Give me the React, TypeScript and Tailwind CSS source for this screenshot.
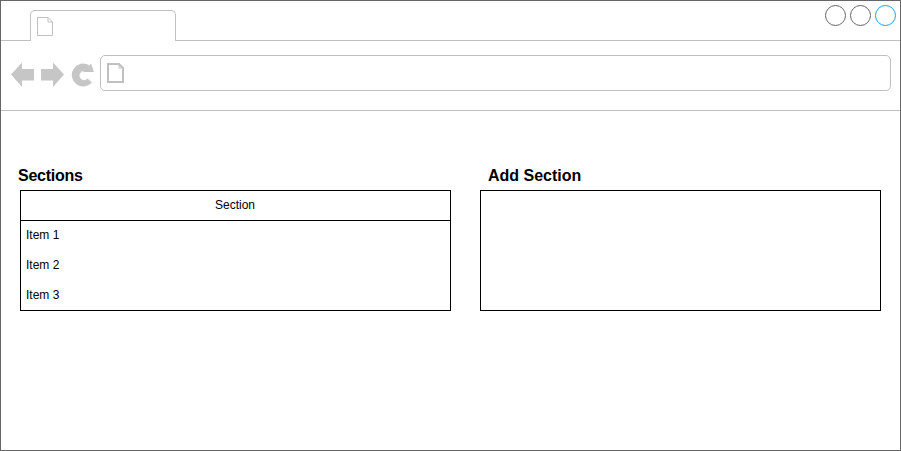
function Doc({ w, h, sw }: { w: number; h: number; sw: number }) {
  return (
    <svg width={w} height={h} viewBox={`0 0 ${w} ${h}`} fill="none" stroke="#c0c0c0" strokeWidth={sw} className="block shrink-0">
      <path d={`M${sw / 2} ${sw / 2}H${w - 5}L${w - sw / 2} 5V${h - sw / 2}H${sw / 2}Z`} />
      <path d={`M${w - 5} ${sw / 2}V5H${w - sw / 2}`} strokeWidth={1} />
    </svg>
  );
}

function Circle({ blue }: { blue?: boolean }) {
  return <div className={`w-[21px] h-[21px] rounded-full border bg-white ${blue ? "border-[#1ba1e2]" : "border-[#666666]"}`} />;
}

function Section() {
  return (
    <div className="w-[431px] h-[121px] border border-black flex flex-col">
      <div className="h-[30px] border-b border-black flex items-center justify-center shrink-0 pr-[1px] pb-[2px]">Section</div>
      {["Item 1", "Item 2", "Item 3"].map((t) => (
        <div key={t} className="h-[30px] flex items-center pl-[5px] pb-[2px] shrink-0">{t}</div>
      ))}
    </div>
  );
}

export default function App() {
  return (
    <div className="w-[901px] h-[451px] border border-[#666666] bg-white text-black text-[12px] overflow-hidden font-['Liberation_Sans',Arial,sans-serif]">
      <div className="h-[40px] border-b border-[#c0c0c0] flex items-start pl-[29px] pr-[4px]">
        <div className="w-[146px] h-[31px] mt-[9px] border border-b-0 border-[#c0c0c0] rounded-t-[5px] bg-white pl-[6px] pt-[6px]">
          <Doc w={16} h={19} sw={1} />
        </div>
        <div className="ml-auto mt-[4px] flex gap-[4px]">
          <Circle />
          <Circle />
          <Circle blue />
        </div>
      </div>
      <div className="h-[70px] border-b border-[#c0c0c0] flex items-start pl-[10px]">
        <svg width="88" height="26" viewBox="0 0 88 26" fill="#c6c6c6" className="mt-[21px] shrink-0 block">
          <path d="M0 12.5 L11 0.5 V7 H23 V18.5 H11 V25 Z" />
          <path d="M53 12.5 L42 0.5 V7 H30 V18.5 H42 V25 Z" />
          <path d="M78 3 A11.5 11.5 0 1 0 81 20.5 L76.5 16.5 A4.5 4.5 0 1 1 75 9.5 Z" />
          <path d="M80 1.5 L83 10 L72 10 Z" />
        </svg>
        <div className="ml-[1px] mt-[14px] w-[791px] h-[36px] border border-[#c0c0c0] rounded-[5px] pl-[6px] pt-[7px]">
          <Doc w={17} h={20} sw={2} />
        </div>
      </div>
      <div className="flex pt-[55px] pl-[17px]">
        <div className="w-[462px] shrink-0">
          <div className="h-[24px] text-[16px] leading-[20px] font-bold tracking-[-0.25px]">Sections</div>
          <div className="ml-[2px]">
            <Section />
          </div>
        </div>
        <div>
          <div className="h-[24px] text-[16px] leading-[20px] font-bold pl-[8px]">Add Section</div>
          <div className="w-[401px] h-[121px] border border-black" />
        </div>
      </div>
    </div>
  );
}
